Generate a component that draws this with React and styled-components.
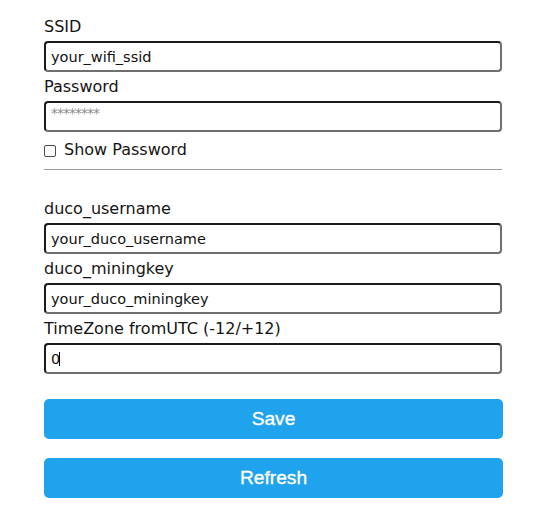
import React from "react";
import styled, { createGlobalStyle } from "styled-components";

const Global = createGlobalStyle`
  html, body { margin: 0; padding: 0; background: #fff; }
  body { font-family: "DejaVu Sans", Verdana, sans-serif; color: #111; }
`;

const Form = styled.form`
  display: flex;
  flex-direction: column;
  width: 459px;
  padding: 17px 0 0 44px;
`;

const Label = styled.label`
  display: block;
  font-size: 16px;
  line-height: 20px;
  height: 20px;
  margin-top: ${(p) => p.$top ?? 5}px;
  margin-bottom: 4px;
  color: #141414;
`;

const Field = styled.div`
  position: relative;
  width: 458px;
`;

const Input = styled.input`
  box-sizing: border-box;
  display: block;
  width: 458px;
  height: 31px;
  margin: 0;
  padding: 0 5px ${(p) => (p.$raise ? 7 : 0)}px 5px;
  font-family: "DejaVu Sans", Verdana, sans-serif;
  font-size: 14.5px;
  line-height: ${(p) => (p.$raise ? 20 : 27)}px;
  color: #111;
  background: #fff;
  border-style: solid;
  border-width: 2px;
  border-color: #1b1b1b #6f6f6f #6f6f6f #1b1b1b;
  border-radius: 4px;
  outline: none;
  &::placeholder {
    color: #8a8a8a;
    font-size: 14px;
    letter-spacing: -1px;
  }
`;

const Caret = styled.span`
  position: absolute;
  left: 15px;
  top: 9px;
  width: 1px;
  height: 14px;
  background: #000;
`;

const CheckRow = styled.label`
  display: flex;
  align-items: center;
  height: 20px;
  margin-top: 8px;
  font-size: 16px;
  line-height: 20px;
  color: #141414;
`;

const Check = styled.input`
  appearance: none;
  box-sizing: border-box;
  width: 12px;
  height: 12px;
  margin: 2px 8px 0 0;
  border: 1px solid #4a4a4a;
  border-radius: 2px;
  background: #fff;
`;

const Rule = styled.hr`
  width: 458px;
  margin: 9px 0 0 0;
  border: 0;
  border-top: 1px solid #9a9a9a;
  height: 0;
`;

const Button = styled.button`
  display: block;
  width: 459px;
  height: 40px;
  margin-top: ${(p) => p.$top}px;
  padding: 0;
  border: 0;
  border-radius: 5px;
  background: #1fa3ec;
  color: #fff;
  font-family: "Liberation Sans", Arial, sans-serif;
  font-size: 19.2px;
  font-weight: 400;
  line-height: 40px;
  cursor: pointer;
  -webkit-text-stroke: 0.35px #fff;
`;

export default function App() {
  return (
    <>
      <Global />
      <Form onSubmit={(e) => e.preventDefault()}>
        <Label $top={0}>SSID</Label>
        <Input defaultValue="your_wifi_ssid" />
        <Label>Password</Label>
        <Input type="password" placeholder="********" $raise />
        <CheckRow>
          <Check type="checkbox" />
          Show Password
        </CheckRow>
        <Rule />
        <Label $top={29}>duco_username</Label>
        <Input defaultValue="your_duco_username" />
        <Label>duco_miningkey</Label>
        <Input defaultValue="your_duco_miningkey" />
        <Label>TimeZone fromUTC (-12/+12)</Label>
        <Field>
          <Input defaultValue="0" />
          <Caret />
        </Field>
        <Button type="button" $top={25}>Save</Button>
        <Button type="button" $top={19}>Refresh</Button>
      </Form>
    </>
  );
}
